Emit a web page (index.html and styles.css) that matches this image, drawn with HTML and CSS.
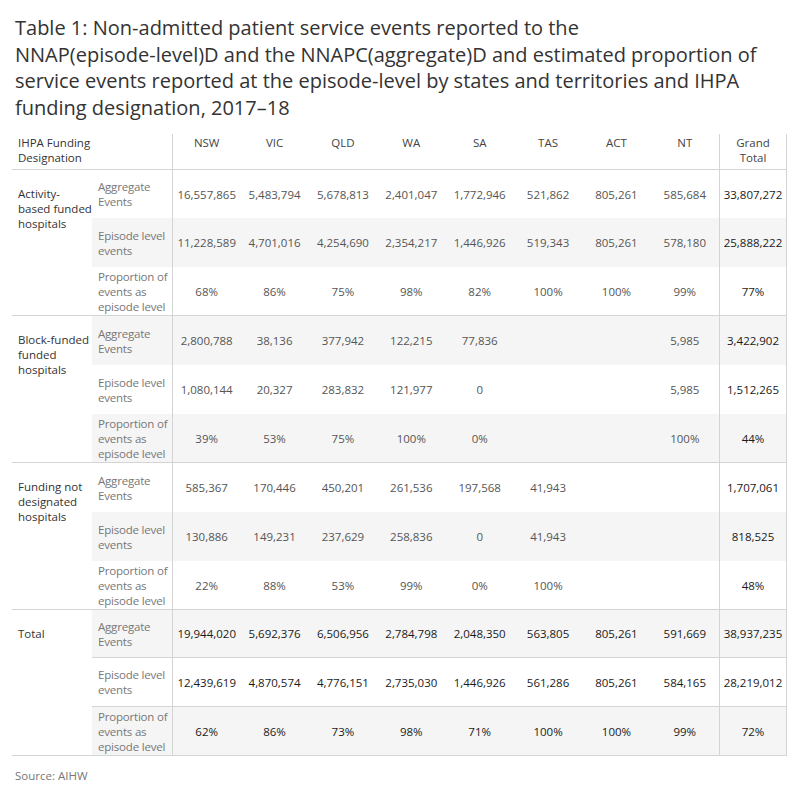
FILE: index.html
```html
<!DOCTYPE html>
<html>
<head>
<meta charset="utf-8">
<link rel="stylesheet" href="styles.css">
</head>
<body>
<div class="page">
  <h1 class="title">Table 1: Non-admitted patient service events reported to the<br>NNAP(episode-level)D and the NNAPC(aggregate)D and estimated proportion of<br>service events reported at the episode-level by states and territories and IHPA<br>funding designation, 2017–18</h1>
  <div class="tbl">
    <div class="hd hd-grp">IHPA Funding<br>Designation</div>
    <div class="hd vl">NSW</div><div class="hd">VIC</div><div class="hd">QLD</div><div class="hd">WA</div><div class="hd">SA</div><div class="hd">TAS</div><div class="hd">ACT</div><div class="hd">NT</div>
    <div class="hd gt">Grand<br>Total</div>

    <!-- Activity-based -->
    <div class="grp end">Activity-<br>based funded<br>hospitals</div>
    <div class="sub">Aggregate<br>Events</div>
    <div class="v vl">16,557,865</div><div class="v">5,483,794</div><div class="v">5,678,813</div><div class="v">2,401,047</div><div class="v">1,772,946</div><div class="v">521,862</div><div class="v">805,261</div><div class="v">585,684</div><div class="v gt t">33,807,272</div>
    <div class="sub b">Episode level<br>events</div>
    <div class="v vl b">11,228,589</div><div class="v b">4,701,016</div><div class="v b">4,254,690</div><div class="v b">2,354,217</div><div class="v b">1,446,926</div><div class="v b">519,343</div><div class="v b">805,261</div><div class="v b">578,180</div><div class="v gt t b">25,888,222</div>
    <div class="sub end">Proportion of<br>events as<br>episode level</div>
    <div class="v vl end">68%</div><div class="v end">86%</div><div class="v end">75%</div><div class="v end">98%</div><div class="v end">82%</div><div class="v end">100%</div><div class="v end">100%</div><div class="v end">99%</div><div class="v gt t end">77%</div>

    <!-- Block-funded -->
    <div class="grp end">Block-funded<br>funded<br>hospitals</div>
    <div class="sub b">Aggregate<br>Events</div>
    <div class="v vl b">2,800,788</div><div class="v b">38,136</div><div class="v b">377,942</div><div class="v b">122,215</div><div class="v b">77,836</div><div class="v b"></div><div class="v b"></div><div class="v b">5,985</div><div class="v gt t b">3,422,902</div>
    <div class="sub">Episode level<br>events</div>
    <div class="v vl">1,080,144</div><div class="v">20,327</div><div class="v">283,832</div><div class="v">121,977</div><div class="v">0</div><div class="v"></div><div class="v"></div><div class="v">5,985</div><div class="v gt t">1,512,265</div>
    <div class="sub b end">Proportion of<br>events as<br>episode level</div>
    <div class="v vl b end">39%</div><div class="v b end">53%</div><div class="v b end">75%</div><div class="v b end">100%</div><div class="v b end">0%</div><div class="v b end"></div><div class="v b end"></div><div class="v b end">100%</div><div class="v gt t b end">44%</div>

    <!-- Funding not designated -->
    <div class="grp end">Funding not<br>designated<br>hospitals</div>
    <div class="sub">Aggregate<br>Events</div>
    <div class="v vl">585,367</div><div class="v">170,446</div><div class="v">450,201</div><div class="v">261,536</div><div class="v">197,568</div><div class="v">41,943</div><div class="v"></div><div class="v"></div><div class="v gt t">1,707,061</div>
    <div class="sub b">Episode level<br>events</div>
    <div class="v vl b">130,886</div><div class="v b">149,231</div><div class="v b">237,629</div><div class="v b">258,836</div><div class="v b">0</div><div class="v b">41,943</div><div class="v b"></div><div class="v b"></div><div class="v gt t b">818,525</div>
    <div class="sub end">Proportion of<br>events as<br>episode level</div>
    <div class="v vl end">22%</div><div class="v end">88%</div><div class="v end">53%</div><div class="v end">99%</div><div class="v end">0%</div><div class="v end">100%</div><div class="v end"></div><div class="v end"></div><div class="v gt t end">48%</div>

    <!-- Total -->
    <div class="grp grp-total end">Total</div>
    <div class="sub b end">Aggregate<br>Events</div>
    <div class="v vl b t end">19,944,020</div><div class="v b t end">5,692,376</div><div class="v b t end">6,506,956</div><div class="v b t end">2,784,798</div><div class="v b t end">2,048,350</div><div class="v b t end">563,805</div><div class="v b t end">805,261</div><div class="v b t end">591,669</div><div class="v gt t b end">38,937,235</div>
    <div class="sub end">Episode level<br>events</div>
    <div class="v vl t end">12,439,619</div><div class="v t end">4,870,574</div><div class="v t end">4,776,151</div><div class="v t end">2,735,030</div><div class="v t end">1,446,926</div><div class="v t end">561,286</div><div class="v t end">805,261</div><div class="v t end">584,165</div><div class="v gt t end">28,219,012</div>
    <div class="sub b end">Proportion of<br>events as<br>episode level</div>
    <div class="v vl b t end">62%</div><div class="v b t end">86%</div><div class="v b t end">73%</div><div class="v b t end">98%</div><div class="v b t end">71%</div><div class="v b t end">100%</div><div class="v b t end">100%</div><div class="v b t end">99%</div><div class="v gt t b end">72%</div>
  </div>
  <div class="source">Source: AIHW</div>
</div>
</body>
</html>
```

FILE: styles.css
```css
html, body {
  margin: 0;
  padding: 0;
  background: #ffffff;
}
.page {
  padding: 15px 0 0 12px;
  font-family: "Open Sans", "Noto Sans", "Liberation Sans", sans-serif;
  color: #333333;
}
.title {
  margin: 0 0 13px 3px;
  font-size: 20px;
  font-weight: normal;
  line-height: 26.5px;
  color: #333333;
  white-space: nowrap;
}
.tbl {
  display: grid;
  width: 775px;
  grid-template-columns: 80px 80px repeat(8, 1fr) 68px;
  grid-template-rows: 36px 48px 49px 49px 49px 49px 49px 49px 49px 49px 48px 49px 49px;
  font-size: 11.5px;
  line-height: 15px;
}
.tbl > div {
  box-sizing: border-box;
}
.hd {
  padding-top: 1px;
  text-align: center;
  color: #444444;
  border-bottom: 1px solid #d4d4d4;
}
.hd-grp {
  grid-column: span 2;
  text-align: left;
  padding-left: 6px;
  color: #333333;
}
.grp {
  grid-row: span 3;
  padding: 16px 0 0 6px;
  color: #333333;
  background: #ffffff;
}
.sub {
  display: flex;
  align-items: center;
  padding-left: 6px;
  color: #777777;
  white-space: nowrap;
  letter-spacing: -0.2px;
}
.v {
  display: flex;
  align-items: center;
  justify-content: center;
  color: #555555;
  white-space: nowrap;
}
.t {
  color: #1a1a1a;
}
.b {
  background: #f5f5f5;
}
.vl {
  border-left: 1px solid #d4d4d4;
}
.gt {
  border-left: 1px solid #d4d4d4;
  border-right: 1px solid #d4d4d4;
}
.end {
  border-bottom: 1px solid #d4d4d4;
}
.source {
  margin: 12px 0 0 3px;
  font-size: 11.5px;
  line-height: 15px;
  color: #777777;
}
```
